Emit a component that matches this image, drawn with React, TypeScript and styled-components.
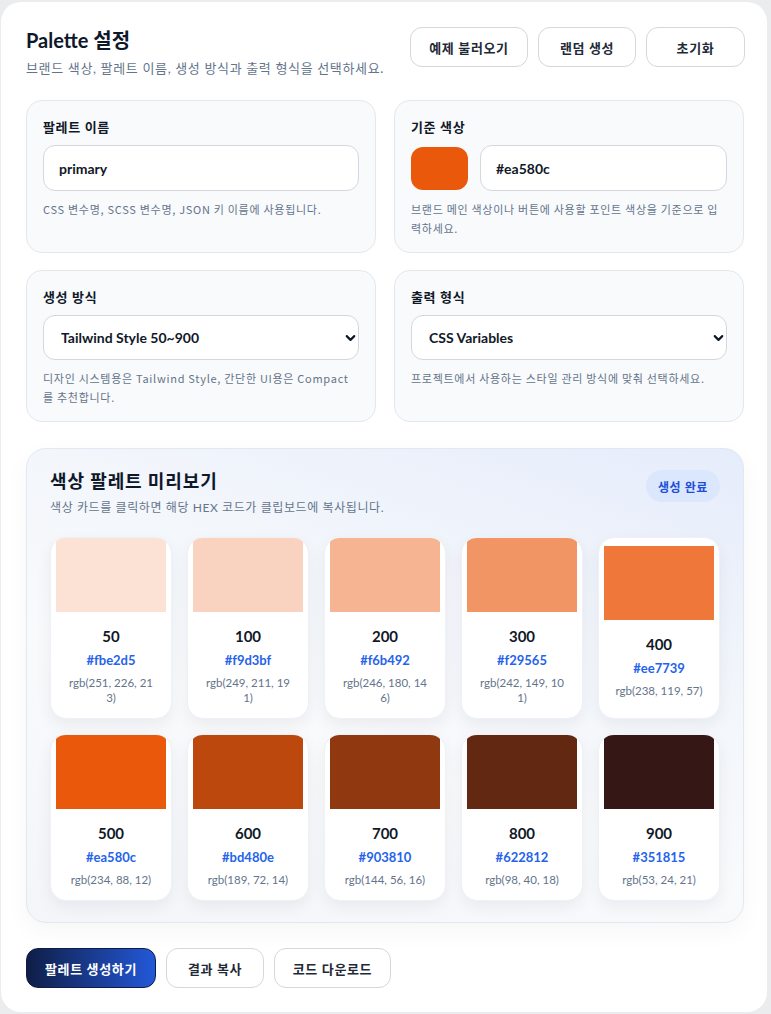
import React, { useState } from 'react';
import styled, { createGlobalStyle } from 'styled-components';
import { ChevronDown } from 'lucide-react';

const GlobalStyle = createGlobalStyle`
  html, body {
    margin: 0;
    padding: 0;
    background: #ebecee;
  }
  body {
    font-family: 'Lato', 'Noto Sans CJK KR', sans-serif;
    color: #111827;
  }
  * {
    box-sizing: border-box;
  }
`;

const Page = styled.div`
  padding: 2px 4px 4px 1px;
`;

const Panel = styled.main`
  background: #ffffff;
  border-radius: 20px;
  padding: 25px 23px 24px 25px;
  display: flex;
  flex-direction: column;
`;

const Header = styled.header`
  display: flex;
  justify-content: space-between;
  align-items: flex-start;
  margin-bottom: 23px;
  margin-right: -1px;
`;

const TitleBlock = styled.div`
  display: flex;
  flex-direction: column;
`;

const Title = styled.h1`
  margin: 0;
  font-size: 20px;
  line-height: 26px;
  font-weight: 700;
  color: #0f172a;
`;

const Subtitle = styled.p`
  margin: 6px 0 0;
  font-size: 13px;
  line-height: 18px;
  letter-spacing: 0.05em;
  color: #64748b;
`;

const ButtonRow = styled.div`
  display: flex;
  gap: 10px;
`;

const Button = styled.button<{ $primary?: boolean; $width: number }>`
  height: 40px;
  width: ${(p) => p.$width}px;
  border-radius: 12px;
  font-family: inherit;
  font-size: 13px;
  letter-spacing: 0.05em;
  font-weight: 700;
  cursor: pointer;
  border: 1px solid ${(p) => (p.$primary ? '#0f1d44' : '#d4d7de')};
  color: ${(p) => (p.$primary ? '#ffffff' : '#1f2937')};
  background: ${(p) =>
    p.$primary ? 'linear-gradient(90deg, #0f1e46 0%, #2358d8 100%)' : '#ffffff'};
`;

const FieldGrid = styled.section`
  display: grid;
  grid-template-columns: 1fr 1fr;
  gap: 17px 18px;
`;

const FieldCard = styled.div`
  background: #f8fafc;
  border: 1px solid #e5e7eb;
  border-radius: 16px;
  padding: 17px 16px 14px;
  display: flex;
  flex-direction: column;
`;

const Label = styled.label`
  font-size: 13px;
  line-height: 18px;
  letter-spacing: 0.05em;
  font-weight: 700;
  color: #111827;
  margin-bottom: 9px;
`;

const InputRow = styled.div`
  display: flex;
  gap: 12px;
  align-items: center;
`;

const TextInput = styled.input`
  width: 100%;
  min-width: 0;
  height: 46px;
  border: 1px solid #d4d7de;
  border-radius: 12px;
  background: #ffffff;
  padding: 0 15px;
  font-family: inherit;
  font-size: 14px;
  font-weight: 700;
  color: #111827;
  outline: none;
`;

const ColorChip = styled.div<{ $color: string }>`
  width: 57px;
  height: 43px;
  flex: none;
  border-radius: 12px;
  background: ${(p) => p.$color};
`;

const SelectWrap = styled.div`
  position: relative;
`;

const Select = styled.select`
  width: 100%;
  height: 45px;
  appearance: none;
  border: 1px solid #d4d7de;
  border-radius: 12px;
  background: #ffffff;
  padding: 0 30px 0 17px;
  font-family: inherit;
  font-size: 14px;
  font-weight: 700;
  color: #111827;
  outline: none;
`;

const SelectArrow = styled(ChevronDown)`
  position: absolute;
  right: 1px;
  top: 50%;
  transform: translateY(-50%);
  pointer-events: none;
`;

const Hint = styled.p`
  margin: 9px 0 0;
  font-family: 'Noto Sans CJK KR', sans-serif;
  font-size: 11px;
  line-height: 19px;
  letter-spacing: 0.065em;
  color: #64748b;
`;

const Preview = styled.section`
  margin-top: 26px;
  border: 1px solid #e2e8f0;
  border-radius: 20px;
  padding: 19px 23px 21px;
  background: linear-gradient(200deg, #e5ecfb 0%, #f3f6fb 35%, #f8fafc 60%, #f3f5f9 100%);
  box-shadow: 0 8px 24px rgba(15, 23, 42, 0.04);
`;

const PreviewHead = styled.div`
  display: flex;
  justify-content: space-between;
  align-items: flex-start;
  margin-bottom: 20px;
`;

const PreviewTitle = styled.h2`
  margin: 0;
  font-size: 18px;
  line-height: 26px;
  letter-spacing: 0.05em;
  font-weight: 700;
  color: #0f172a;
`;

const PreviewSub = styled.p`
  margin: 5px 0 0;
  font-size: 12px;
  line-height: 18px;
  letter-spacing: 0.05em;
  color: #64748b;
`;

const Badge = styled.span`
  margin-top: 2px;
  height: 32px;
  padding: 0 12px;
  border-radius: 999px;
  background: #dbe7fd;
  color: #1d4ed8;
  font-size: 12px;
  letter-spacing: 0.05em;
  font-weight: 700;
  display: flex;
  align-items: center;
`;

const SwatchGrid = styled.div`
  display: grid;
  grid-template-columns: repeat(5, 122px);
  gap: 15px;
`;

const SwatchCard = styled.button`
  background: #ffffff;
  border: 1px solid #eef1f5;
  border-radius: 16px;
  overflow: hidden;
  padding: 0 5px 13px;
  display: flex;
  flex-direction: column;
  justify-content: center;
  font-family: inherit;
  cursor: pointer;
  box-shadow: 0 6px 16px rgba(15, 23, 42, 0.06);
`;

const SwatchColor = styled.div<{ $color: string }>`
  height: 74px;
  width: 100%;
  flex: none;
  background: ${(p) => p.$color};
`;

const SwatchInfo = styled.div`
  padding: 14px 11px 0;
  display: flex;
  flex-direction: column;
  align-items: center;
  text-align: center;
  word-break: break-all;
`;

const Step = styled.div`
  font-size: 15px;
  line-height: 20px;
  font-weight: 700;
  color: #111827;
`;

const Hex = styled.div`
  margin-top: 4px;
  font-size: 13px;
  line-height: 20px;
  font-weight: 700;
  color: #2563eb;
`;

const Rgb = styled.div`
  margin-top: 5px;
  font-size: 11.5px;
  line-height: 15px;
  color: #64748b;
`;

const Footer = styled.div`
  display: flex;
  gap: 10px;
  margin-top: 25px;
`;

const palette = [
  { step: 50, hex: '#fbe2d5' },
  { step: 100, hex: '#f9d3bf' },
  { step: 200, hex: '#f6b492' },
  { step: 300, hex: '#f29565' },
  { step: 400, hex: '#ee7739' },
  { step: 500, hex: '#ea580c' },
  { step: 600, hex: '#bd480e' },
  { step: 700, hex: '#903810' },
  { step: 800, hex: '#622812' },
  { step: 900, hex: '#351815' },
];

const toRgb = (hex: string) => {
  const n = parseInt(hex.slice(1), 16);
  return `rgb(${(n >> 16) & 255}, ${(n >> 8) & 255}, ${n & 255})`;
};

const App: React.FunctionComponent = () => {
  const [name, setName] = useState('primary');
  const [base, setBase] = useState('#ea580c');

  return (
    <Page>
      <GlobalStyle />
      <Panel>
        <Header>
          <TitleBlock>
            <Title>Palette 설정</Title>
            <Subtitle>브랜드 색상, 팔레트 이름, 생성 방식과 출력 형식을 선택하세요.</Subtitle>
          </TitleBlock>
          <ButtonRow>
            <Button $width={118}>예제 불러오기</Button>
            <Button $width={98}>랜덤 생성</Button>
            <Button $width={99}>초기화</Button>
          </ButtonRow>
        </Header>

        <FieldGrid>
          <FieldCard>
            <Label>팔레트 이름</Label>
            <TextInput value={name} onChange={(e) => setName(e.target.value)} />
            <Hint>CSS 변수명, SCSS 변수명, JSON 키 이름에 사용됩니다.</Hint>
          </FieldCard>
          <FieldCard>
            <Label>기준 색상</Label>
            <InputRow>
              <ColorChip $color={base} />
              <TextInput value={base} onChange={(e) => setBase(e.target.value)} />
            </InputRow>
            <Hint>브랜드 메인 색상이나 버튼에 사용할 포인트 색상을 기준으로 입력하세요.</Hint>
          </FieldCard>
          <FieldCard>
            <Label>생성 방식</Label>
            <SelectWrap>
              <Select defaultValue="tailwind">
                <option value="tailwind">Tailwind Style 50~900</option>
                <option value="compact">Compact</option>
              </Select>
              <SelectArrow size={15} strokeWidth={3.5} color="#111827" />
            </SelectWrap>
            <Hint>디자인 시스템용은 Tailwind Style, 간단한 UI용은 Compact를 추천합니다.</Hint>
          </FieldCard>
          <FieldCard>
            <Label>출력 형식</Label>
            <SelectWrap>
              <Select defaultValue="css">
                <option value="css">CSS Variables</option>
                <option value="scss">SCSS</option>
                <option value="json">JSON</option>
              </Select>
              <SelectArrow size={15} strokeWidth={3.5} color="#111827" />
            </SelectWrap>
            <Hint>프로젝트에서 사용하는 스타일 관리 방식에 맞춰 선택하세요.</Hint>
          </FieldCard>
        </FieldGrid>

        <Preview>
          <PreviewHead>
            <div>
              <PreviewTitle>색상 팔레트 미리보기</PreviewTitle>
              <PreviewSub>색상 카드를 클릭하면 해당 HEX 코드가 클립보드에 복사됩니다.</PreviewSub>
            </div>
            <Badge>생성 완료</Badge>
          </PreviewHead>
          <SwatchGrid>
            {palette.map((c) => (
              <SwatchCard key={c.step}>
                <SwatchColor $color={c.hex} />
                <SwatchInfo>
                  <Step>{c.step}</Step>
                  <Hex>{c.hex}</Hex>
                  <Rgb>{toRgb(c.hex)}</Rgb>
                </SwatchInfo>
              </SwatchCard>
            ))}
          </SwatchGrid>
        </Preview>

        <Footer>
          <Button $primary $width={130}>팔레트 생성하기</Button>
          <Button $width={98}>결과 복사</Button>
          <Button $width={117}>코드 다운로드</Button>
        </Footer>
      </Panel>
    </Page>
  );
};

export default App;
